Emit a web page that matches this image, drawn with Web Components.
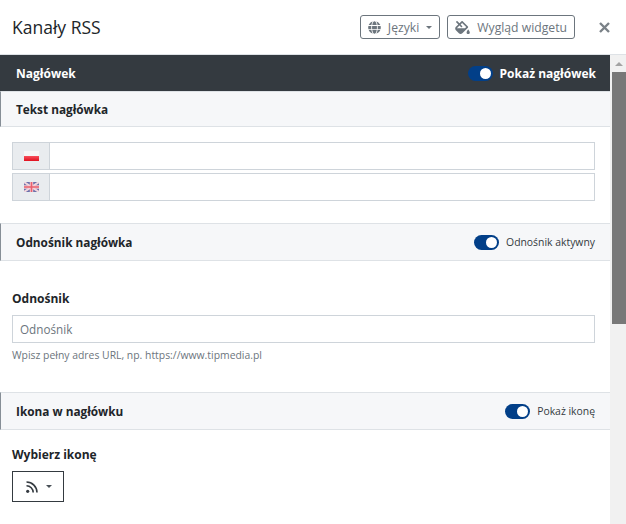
<!DOCTYPE html>
<html lang="pl">
<head>
<meta charset="utf-8">
<title>Kanały RSS</title>
<style>
  html, body { margin: 0; height: 524px; overflow: hidden; background: #fff; }
  body { font-family: "Open Sans", "Noto Sans", sans-serif; color: #212529; }
</style>
</head>
<body>
<rss-modal>
  <span slot="title">Kanały RSS</span>
  <header-button slot="actions" caret>
    <svg slot="icon" width="13" height="13" viewBox="0 0 496 512"><path fill="#6c757d" d="M336.500 160C322 70.700 287.800 8 248 8s-74 62.700-88.500 152h177zM152 256c0 22.200 1.200 43.500 3.300 64h185.300c2.100-20.500 3.300-41.800 3.300-64s-1.200-43.500-3.300-64H155.300c-2.100 20.500-3.300 41.800-3.300 64zm324.700-96c-28.600-67.900-86.500-120.400-158-141.600 24.400 33.800 41.200 84.700 50 141.600h108zM177.200 18.400C105.800 39.600 47.800 92.100 19.300 160h108c8.700-56.900 25.500-107.800 49.900-141.600zM487.400 192H372.700c2.100 21 3.300 42.500 3.300 64s-1.200 43-3.300 64h114.600c5.500-20.500 8.600-41.800 8.600-64s-3.100-43.500-8.500-64zM120 256c0-21.500 1.200-43 3.300-64H8.600C3.200 212.500 0 233.800 0 256s3.200 43.500 8.600 64h114.600c-2-21-3.200-42.500-3.200-64zm39.500 96c14.500 89.300 48.700 152 88.500 152s74-62.700 88.500-152h-177zm159.300 141.600c71.400-21.200 129.400-73.700 158-141.600h-108c-8.800 56.900-25.600 107.800-50 141.600zM19.300 352c28.600 67.900 86.500 120.400 158 141.600-24.400-33.800-41.200-84.700-50-141.600h-108z"/></svg>
    Języki
  </header-button>
  <header-button slot="actions">
    <svg slot="icon" width="15" height="13" viewBox="0 0 576 512"><path fill="#6c757d" d="M512 320s-64 92.650-64 128c0 35.350 28.660 64 64 64s64-28.650 64-64-64-128-64-128zm-9.370-102.940L294.940 9.370C288.690 3.120 280.500 0 272.310 0s-16.380 3.120-22.620 9.370l-81.580 81.580L81.930 4.760c-6.250-6.250-16.380-6.250-22.620 0L36.690 27.380c-6.240 6.250-6.240 16.380 0 22.630l86.190 86.180-94.760 94.760c-37.490 37.480-37.490 98.260 0 135.750l117.190 117.190c18.740 18.740 43.310 28.120 67.870 28.120 24.570 0 49.130-9.370 67.870-28.120l221.570-221.570c12.500-12.500 12.500-32.750.01-45.250zm-116.220 70.970H65.930c1.360-3.840 3.570-7.980 7.430-11.830l13.150-13.150 81.610-81.610 58.600 58.600c12.490 12.490 32.750 12.490 45.240 0 12.490-12.490 12.490-32.750 0-45.240l-58.600-58.600 58.950-58.950 162.440 162.440-48.340 48.340z"/></svg>
    Wygląd widgetu
  </header-button>

  <section-bar variant="dark" bold-label label="Pokaż nagłówek">Nagłówek</section-bar>
  <section-bar short>Tekst nagłówka</section-bar>
  <form-block style="--pad: 15px 15px 19px 12px">
    <flag-input lang-code="pl"></flag-input>
    <flag-input lang-code="en"></flag-input>
  </form-block>
  <section-bar label="Odnośnik aktywny">Odnośnik nagłówka</section-bar>
  <form-block style="--pad: 29px 15px 30px 12px">
    <field-label>Odnośnik</field-label>
    <text-field placeholder="Odnośnik"></text-field>
    <field-help>Wpisz pełny adres URL, np. https://www.tipmedia.pl</field-help>
  </form-block>
  <section-bar label="Pokaż ikonę">Ikona w nagłówku</section-bar>
  <form-block style="--pad: 16px 15px 0 12px">
    <field-label>Wybierz ikonę</field-label>
    <icon-picker></icon-picker>
  </form-block>
</rss-modal>

<script>
class RssModal extends HTMLElement {
  constructor() {
    super();
    this.attachShadow({ mode: 'open' });
    this.shadowRoot.innerHTML = `
      <style>
        :host { display: flex; flex-direction: column; width: 626px; height: 524px; overflow: hidden; }
        header { flex: none; height: 55px; box-sizing: border-box; display: flex; align-items: center; padding: 0 16px 0 12px; border-bottom: 1px solid #dee2e6; }
        .title { flex: 1; font-size: 17.500px; font-weight: 400; color: #212529; }
        .actions { display: flex; gap: 7px; margin-right: 24px; }
        .close { width: 11px; height: 11px; display: block; }
        .main { flex: 1; display: flex; min-height: 0; }
        .content { width: 610px; flex: none; overflow: hidden; }
        .scrollbar { flex: 1; background: #f1f1f1; display: flex; flex-direction: column; }
        .arrow { height: 17px; display: flex; align-items: center; justify-content: center; padding-left: 1px; }
        .thumb { height: 252px; margin-left: 2px; background: #787878; }
      </style>
      <header>
        <div class="title"><slot name="title"></slot></div>
        <div class="actions"><slot name="actions"></slot></div>
        <svg class="close" viewBox="0 0 11 11"><path d="M1 1l9 9M10 1l-9 9" stroke="#7b8288" stroke-width="2.400"/></svg>
      </header>
      <div class="main">
        <div class="content"><slot></slot></div>
        <div class="scrollbar">
          <div class="arrow"><svg width="8" height="4" viewBox="0 0 8 4"><path d="M4 0 8 4H0z" fill="#a3a3a3"/></svg></div>
          <div class="thumb"></div>
        </div>
      </div>`;
  }
}

class HeaderButton extends HTMLElement {
  constructor() {
    super();
    this.attachShadow({ mode: 'open' });
    this.shadowRoot.innerHTML = `
      <style>
        :host { display: inline-flex; align-items: center; gap: 7px; height: 24px; box-sizing: border-box; padding: 0 7px; border: 1px solid #6c757d; border-radius: 3px; font-size: 12.200px; color: #6c757d; background: #fff; white-space: nowrap; }
        .caret { width: 0; height: 0; border: 3px solid transparent; border-top-color: #6c757d; border-bottom: 0; }
        ::slotted(svg) { display: block; }
      </style>
      <slot name="icon"></slot><slot></slot>
      ${this.hasAttribute('caret') ? '<span class="caret"></span>' : ''}`;
  }
}

class ToggleSwitch extends HTMLElement {
  constructor() {
    super();
    this.attachShadow({ mode: 'open' });
    this.shadowRoot.innerHTML = `
      <style>
        :host { display: block; width: 25px; height: 15px; border-radius: 8px; background: #023f88; position: relative; flex: none; }
        .knob { position: absolute; top: 2px; right: 2px; width: 11px; height: 11px; border-radius: 50%; background: #fff; }
      </style>
      <span class="knob"></span>`;
  }
}

class SectionBar extends HTMLElement {
  constructor() {
    super();
    const label = this.getAttribute('label');
    this.attachShadow({ mode: 'open' });
    this.shadowRoot.innerHTML = `
      <style>
        :host { display: flex; align-items: center; justify-content: space-between; box-sizing: border-box; height: 38px; padding: 0 15px 0 15px; background: #f6f7f9; color: #212529; border-top: 1px solid #dee2e6; border-bottom: 1px solid #dee2e6; border-left: 1px solid #868e96; font-size: 11.800px; }
        :host([short]) { height: 36px; }
        :host([variant="dark"]) { height: 36px; padding: 0 14px 0 16px; background: #343a40; color: #fff; border: 0; font-size: 12px; }
        .title { font-weight: 700; }
        .side { display: flex; align-items: center; gap: 7px; font-size: 10.400px; color: #343a40; }
        :host([bold-label]) .side { font-size: 12px; font-weight: 700; color: #fff; }
      </style>
      <div class="title"><slot></slot></div>
      ${label ? `<div class="side"><toggle-switch></toggle-switch><span>${label}</span></div>` : ''}`;
  }
}

class FormBlock extends HTMLElement {
  constructor() {
    super();
    this.attachShadow({ mode: 'open' });
    this.shadowRoot.innerHTML = `
      <style>
        :host { display: flex; flex-direction: column; padding: var(--pad); background: #fff; }
      </style>
      <slot></slot>`;
  }
}

const FLAGS = {
  pl: `<svg width="15" height="10" viewBox="0 0 15 10"><defs><linearGradient id="r" x1="0" y1="0" x2="0" y2="1"><stop offset="0" stop-color="#f8505c"/><stop offset="1" stop-color="#e0101f"/></linearGradient></defs><rect width="15" height="5" fill="#f6f6f6"/><rect y="5" width="15" height="5" fill="url(#r)"/></svg>`,
  en: `<svg width="15" height="10" viewBox="0 0 15 10"><rect width="15" height="10" fill="#6a70ab"/><path d="M0 0l15 10M15 0 0 10" stroke="#f1d6dc" stroke-width="2"/><path d="M7.500 0v10M0 5h15" stroke="#f6ccd3" stroke-width="3.400"/><path d="M7.500 0v10M0 5h15" stroke="#e8606e" stroke-width="1.600"/></svg>`
};

class FlagInput extends HTMLElement {
  constructor() {
    super();
    this.attachShadow({ mode: 'open' });
    this.shadowRoot.innerHTML = `
      <style>
        :host { display: flex; height: 28px; box-sizing: border-box; border: 1px solid #ced4da; background: #fff; margin-bottom: 3px; }
        .flag { width: 36px; flex: none; background: #e9ecef; border-right: 1px solid #ced4da; display: flex; align-items: center; justify-content: center; }
        input { flex: 1; min-width: 0; border: 0; outline: 0; padding: 0 8px; background: transparent; }
        svg { display: block; }
      </style>
      <div class="flag">${FLAGS[this.getAttribute('lang-code')]}</div>
      <input type="text">`;
  }
}

class FieldLabel extends HTMLElement {
  constructor() {
    super();
    this.attachShadow({ mode: 'open' });
    this.shadowRoot.innerHTML = `
      <style>
        :host { display: block; font-size: 12px; font-weight: 700; line-height: 17px; margin-bottom: 8px; color: #212529; }
      </style>
      <slot></slot>`;
  }
}

class TextField extends HTMLElement {
  constructor() {
    super();
    this.attachShadow({ mode: 'open' });
    this.shadowRoot.innerHTML = `
      <style>
        :host { display: block; }
        input { display: block; width: 100%; height: 28px; box-sizing: border-box; border: 1px solid #ced4da; padding: 0 7px; outline: 0; font: 11.700px "Open Sans", "Noto Sans", sans-serif; }
        input::placeholder { color: #6c757d; opacity: 1; }
      </style>
      <input type="text" placeholder="${this.getAttribute('placeholder') || ''}">`;
  }
}

class FieldHelp extends HTMLElement {
  constructor() {
    super();
    this.attachShadow({ mode: 'open' });
    this.shadowRoot.innerHTML = `
      <style>
        :host { display: block; font-size: 10.400px; line-height: 14px; margin-top: 5px; color: #6c757d; }
      </style>
      <slot></slot>`;
  }
}

class IconPicker extends HTMLElement {
  constructor() {
    super();
    this.attachShadow({ mode: 'open' });
    this.shadowRoot.innerHTML = `
      <style>
        :host { display: flex; align-items: center; gap: 8px; width: 52px; height: 31px; box-sizing: border-box; padding-left: 13px; border: 1px solid #343a40; }
        svg { display: block; }
        .caret { width: 0; height: 0; border: 3px solid transparent; border-top-color: #495057; border-bottom: 0; }
      </style>
      <svg width="12" height="12" viewBox="0 0 12 12"><circle cx="1.700" cy="10.300" r="1.600" fill="#343a40"/><path d="M.5 4.800a6.700 6.700 0 0 1 6.700 6.700M.5 1a10.500 10.500 0 0 1 10.500 10.500" fill="none" stroke="#343a40" stroke-width="1.600"/></svg>
      <span class="caret"></span>`;
  }
}

customElements.define('rss-modal', RssModal);
customElements.define('header-button', HeaderButton);
customElements.define('toggle-switch', ToggleSwitch);
customElements.define('section-bar', SectionBar);
customElements.define('form-block', FormBlock);
customElements.define('flag-input', FlagInput);
customElements.define('field-label', FieldLabel);
customElements.define('text-field', TextField);
customElements.define('field-help', FieldHelp);
customElements.define('icon-picker', IconPicker);
</script>
</body>
</html>
